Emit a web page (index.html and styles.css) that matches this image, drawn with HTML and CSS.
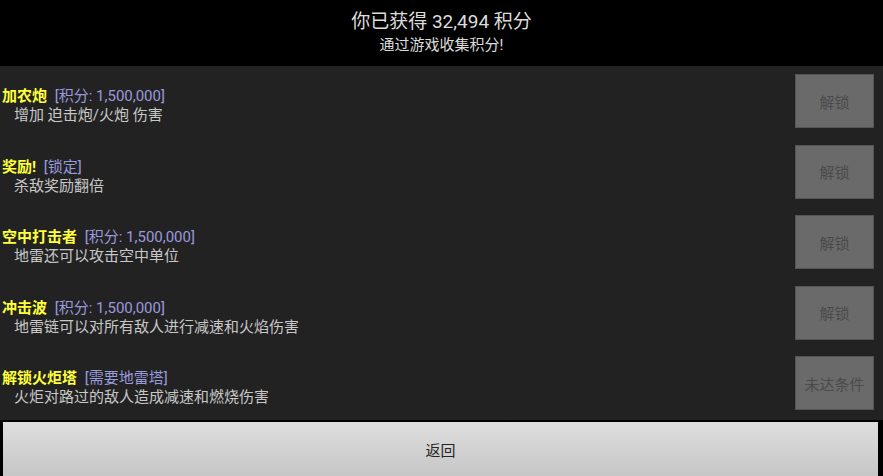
FILE: index.html
```html
<!DOCTYPE html>
<html lang="zh-CN">
<head>
    <meta charset="UTF-8">
    <meta name="viewport" content="width=device-width, initial-scale=1.0">
    <title>积分升级</title>
    <link rel="stylesheet" href="styles.css">
</head>
<body>

<div class="screen">
    <!-- Points header -->
    <div class="header">
        <div class="points">你已获得 32,494 积分</div>
        <div class="hint">通过游戏收集积分!</div>
    </div>

    <!-- Upgrade list -->
    <div class="upgrades">
        <div class="row">
            <div class="info">
                <div class="title">加农炮 <span class="cost">[积分: 1,500,000]</span></div>
                <div class="desc">增加 迫击炮/火炮 伤害</div>
            </div>
            <button class="unlock">解锁</button>
        </div>
        <div class="row">
            <div class="info">
                <div class="title">奖励! <span class="cost">[锁定]</span></div>
                <div class="desc">杀敌奖励翻倍</div>
            </div>
            <button class="unlock">解锁</button>
        </div>
        <div class="row">
            <div class="info">
                <div class="title">空中打击者 <span class="cost">[积分: 1,500,000]</span></div>
                <div class="desc">地雷还可以攻击空中单位</div>
            </div>
            <button class="unlock">解锁</button>
        </div>
        <div class="row">
            <div class="info">
                <div class="title">冲击波 <span class="cost">[积分: 1,500,000]</span></div>
                <div class="desc">地雷链可以对所有敌人进行减速和火焰伤害</div>
            </div>
            <button class="unlock">解锁</button>
        </div>
        <div class="row">
            <div class="info">
                <div class="title">解锁火炬塔 <span class="cost">[需要地雷塔]</span></div>
                <div class="desc">火炬对路过的敌人造成减速和燃烧伤害</div>
            </div>
            <button class="unlock">未达条件</button>
        </div>
    </div>

    <!-- Back button -->
    <div class="footer">
        <button class="back">返回</button>
    </div>
</div>

</body>
</html>
```

FILE: styles.css
```css
body {
    margin: 0;
    padding: 0;
    background-color: #000;
    font-family: Roboto, "Noto Sans CJK SC", sans-serif;
    overflow: hidden;
}

.screen {
    width: 883px;
    height: 476px;
    display: flex;
    flex-direction: column;
}

.header {
    height: 66px;
    background-color: #000;
    color: #dcdcdc;
    text-align: center;
    display: flex;
    flex-direction: column;
    justify-content: center;
    padding-bottom: 2px;
    box-sizing: border-box;
}

.points {
    font-size: 19px;
    line-height: 26px;
}

.hint {
    font-size: 15px;
    line-height: 20px;
}

.upgrades {
    height: 354px;
    background-color: #222;
}

.row {
    height: 70.5px;
    display: flex;
    align-items: center;
    justify-content: space-between;
    padding: 0 9px 0 2px;
}

.info {
    margin-top: 10px;
}

.title {
    color: #ffff3a;
    font-size: 15px;
    font-weight: bold;
    line-height: 19px;
}

.cost {
    color: #9a9ade;
    font-size: 15px;
    font-weight: normal;
    margin-left: 4px;
}

.desc {
    color: #c8c8c8;
    font-size: 15px;
    line-height: 19px;
    padding-left: 12px;
}

.unlock {
    width: 79px;
    height: 54px;
    background-color: #6a6a6a;
    border: 1px solid #555;
    color: #4a4a4a;
    font-family: inherit;
    font-size: 15px;
    padding: 0;
    cursor: pointer;
}

.footer {
    flex: 1;
    background-color: #000;
    padding: 2px 5px 0 3px;
    display: flex;
}

.back {
    flex: 1;
    border: none;
    background: linear-gradient(#dedede, #c6c6c6);
    color: #262626;
    font-family: inherit;
    font-size: 15px;
    padding: 0;
    cursor: pointer;
}
```
